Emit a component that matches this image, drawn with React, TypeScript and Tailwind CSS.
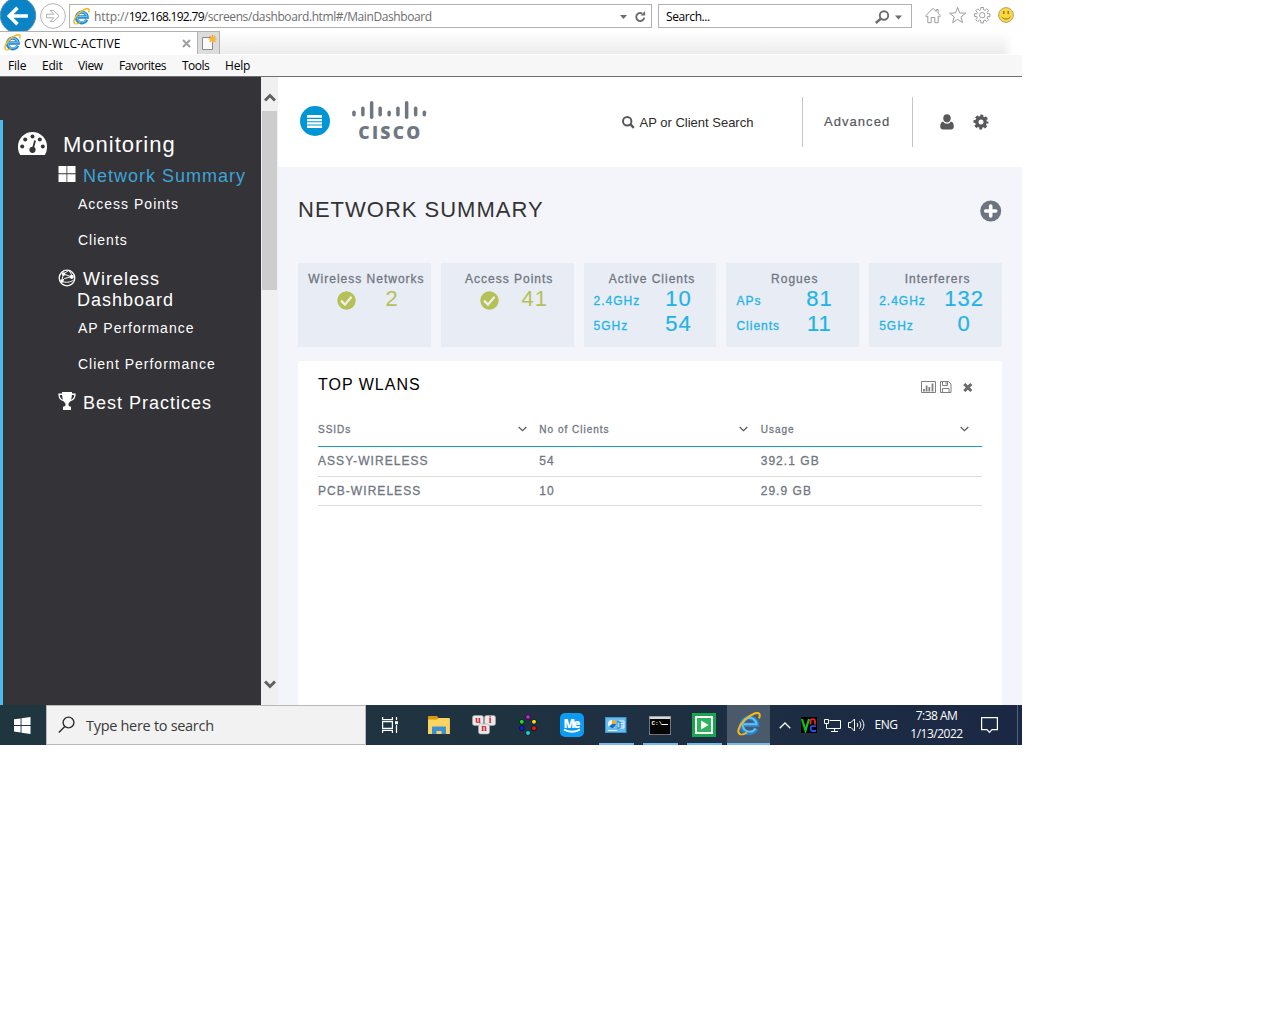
import React from "react";

const ui = "font-['Open_Sans','Noto_Sans',sans-serif]";

function IELogo({ size }: { size: number }) {
  return (
    <svg width={size} height={size} viewBox="0 0 24 24" fill="none" className="shrink-0">
      <path d="M19.4 16.4A7.6 7.600 0 1 1 20 12.700H7" stroke="#2583cc" strokeWidth="4.600" />
      <path d="M18.600 16.400A7 7 0 1 1 19.600 12.200H7" stroke="#66bff0" strokeWidth="2" />
      <path d="M3.600 22.400C-.8 21 1.800 13.600 8 7.600 14 2 21.200-.8 22.500 2.200c.5 1.200.2 2.600-.5 4.200" stroke="#f4b81c" strokeWidth="2.100" />
      <path d="M3.600 22.400c1.800.6 4.200-.5 6.400-1.900" stroke="#f4b81c" strokeWidth="1.600" />
    </svg>
  );
}

function Gear({ size, color }: { size: number; color: string }) {
  return (
    <svg width={size} height={size} viewBox="0 0 16 16" fill="none" className="shrink-0">
      <circle cx="8" cy="8" r="4.2" stroke={color} strokeWidth="3.400" />
      <circle cx="8" cy="8" r="6.300" stroke={color} strokeWidth="2.400" strokeDasharray="2.900 2.048" strokeDashoffset="1.450" />
    </svg>
  );
}

function Toolbar() {
  return (
    <div className="flex h-[31px] items-start">
      <svg width="68" height="31" viewBox="0 0 68 31" fill="none" className="shrink-0">
        <circle cx="18" cy="15.5" r="17.7" fill="#0a84c6" stroke="#5e8ba8" />
        <path d="M28 16H10M17.5 7.8 9.3 16l8.2 8.2" stroke="#fff" strokeWidth="3.6" />
        <circle cx="53" cy="16" r="12.4" stroke="#b4b4b4" />
        <path d="M46.5 14.2h7.3l-3.4-3.7h3.2l5.6 5.5-5.6 5.5h-3.2l3.4-3.7h-7.3z" stroke="#b0b0b0" />
      </svg>
      <div className="ml-[1px] mt-[4px] flex h-[24px] w-[583px] shrink-0 items-center border border-[#b2b2b2] bg-white pl-[3px]">
        <IELogo size={17} />
        <span className={`${ui} ml-[4px] mt-[2px] whitespace-pre text-[12px] leading-[22px] tracking-[-0.400px] text-[#6d6d6d]`}>
          <span className="tracking-[-0.080px]">http://</span><span className="tracking-[-0.700px] text-black">192.168.192.79</span>/screens/dashboard.html#/MainDashboard
        </span>
        <svg width="30" height="14" viewBox="0 0 30 14" className="ml-auto mr-[2px] mt-[1px] shrink-0" fill="none">
          <path d="M1 5h7L4.500 9z" fill="#6d6d6d" />
          <path d="M25.200 7.600a4 4 0 1 1-2-4.100" stroke="#6d6d6d" strokeWidth="1.900" />
          <path d="M21.500 5.600h4.600V1z" fill="#6d6d6d" />
        </svg>
      </div>
      <div className="ml-[6px] mt-[4px] flex h-[24px] w-[254px] shrink-0 items-center border border-[#b2b2b2] bg-white pl-[7px]">
        <span className={`${ui} mt-[2px] text-[12px] tracking-[-0.400px] text-black`}>Search...</span>
        <svg width="30" height="16" viewBox="0 0 30 16" className="ml-auto mr-[7px] mt-[1px] shrink-0" fill="none">
          <circle cx="10" cy="6.500" r="4.200" stroke="#6d6d6d" strokeWidth="1.900" />
          <path d="M7 9.500 1.800 14" stroke="#6d6d6d" strokeWidth="2.400" />
          <path d="M21 6.500h7l-3.500 4z" fill="#6d6d6d" />
        </svg>
      </div>
      <svg width="110" height="31" viewBox="912 0 110 31" fill="none" stroke="#9d9d9d" className="shrink-0">
        <path d="M925.5 15.8 933 8.4l3.2 3.1V9.5h1.8v3.8l2.6 2.5-1.2 1.2-1.2-1v6.700h-3.400v-5.200h-3.600v5.200h-3.400V16l-1.200 1z" />
        <path d="m957.6 7.4 2.1 5.5 5.9.3-4.6 3.7 1.6 5.7-5-3.2-4.9 3.2 1.5-5.7-4.6-3.7 5.9-.3z" />
        <circle cx="982.2" cy="15.2" r="2.7" />
        <path d="M980.8 9.8v-2.300h2.800v2.300l1.400.6 1.700-1.600 1.900 1.900-1.600 1.700.6 1.400h2.300v2.800h-2.300l-.6 1.400 1.600 1.700-1.900 1.900-1.700-1.600-1.400.6v2.300h-2.800v-2.300l-1.400-.6-1.700 1.600-1.900-1.900 1.600-1.700-.6-1.400h-2.300v-2.800h2.300l.6-1.400-1.600-1.700 1.900-1.900 1.700 1.600z" />
        <circle cx="1006" cy="15" r="7.400" fill="#fcd83c" stroke="#a8a286" />
        <path d="M1003.800 11v3M1008.200 11v3" stroke="#8a7420" strokeWidth="1.400" />
        <path d="M1001.800 16.800c1.800 3 6.600 3 8.400 0" stroke="#8a7420" />
      </svg>
    </div>
  );
}

function Tabs() {
  return (
    <div className="flex h-[23px]">
      <div className="flex w-[197px] shrink-0 items-center border-t border-[#b2b2b2] bg-white pl-[4px]">
        <div className="-mt-[1px]"><IELogo size={17} /></div>
        <span className={`${ui} ml-[3px] mt-[1px] text-[12px] tracking-[0.080px] text-black`}>CVN-WLC-ACTIVE</span>
        <svg width="9" height="9" viewBox="0 0 9 9" className="ml-auto mr-[6px]">
          <path d="m1 1 7 7M8 1 1 8" stroke="#a0a0a0" strokeWidth="2" />
        </svg>
      </div>
      <div className="flex w-[23px] shrink-0 border border-b-0 border-[#b2b2b2] bg-[#dcdcdc]">
        <svg width="21" height="22" viewBox="0 0 21 22" fill="none">
          <path d="M4.500 5.500h10v12h-10z" fill="#fafafa" stroke="#8a8a8a" />
          <path d="M14.500 3v8M10.500 7h8M11.700 4.200l5.600 5.600M17.300 4.200l-5.600 5.600" stroke="#f0a010" strokeWidth="1.200" />
          <circle cx="14.500" cy="7" r="2.200" fill="#ffb52b" />
        </svg>
      </div>
      <div className="flex grow bg-gradient-to-b from-white to-[#ececec]">
        <div className="ml-auto w-[20px] bg-gradient-to-r from-white/0 to-white to-60%" />
      </div>
    </div>
  );
}

function MenuBar() {
  return (
    <div className={`${ui} flex h-[23px] items-center border-b border-t border-b-[#707070] border-t-white bg-[#f7f7f7] pl-[8px] pt-[1px] text-[12px] text-black`}>
      <span className="w-[34px] tracking-[-0.200px]">File</span>
      <span className="w-[36px] tracking-[-0.200px]">Edit</span>
      <span className="w-[41px] tracking-[-0.400px]">View</span>
      <span className="w-[63px] tracking-[-0.400px]">Favorites</span>
      <span className="w-[43px] tracking-[-0.500px]">Tools</span>
      <span className="tracking-[-0.200px]">Help</span>
    </div>
  );
}

function SubItem({ children }: { children: React.ReactNode }) {
  return <div className="flex h-[36px] items-center pl-[75px] text-[14px] tracking-[1px]">{children}</div>;
}

function Sidebar() {
  return (
    <div className="flex w-[261px] shrink-0 flex-col bg-[#343338] pt-[43px] text-white">
      <div className="grow border-l-[3px] border-[#4cbcf0]">
        <div className="flex h-[46px] items-center pl-[15px] pt-[2px] text-[22px] tracking-[1px]">
          <svg width="29" height="23" viewBox="0 0 29 23" className="-mt-[2px] mr-[16px] shrink-0">
            <path d="M2.200 23A14.500 14.500 0 0 1 0 14.500a14.500 14.500 0 0 1 29 0A14.500 14.500 0 0 1 26.800 23z" fill="#fff" />
            <g fill="#343338">
              <circle cx="4.200" cy="14.600" r="2" />
              <circle cx="7.200" cy="7.400" r="2" />
              <circle cx="14.500" cy="4.400" r="2" />
              <circle cx="21.800" cy="7.400" r="2" />
              <circle cx="24.800" cy="14.600" r="2" />
              <circle cx="14.500" cy="17.800" r="3.100" />
            </g>
            <path d="m14.800 17 2.300-8.600" stroke="#343338" strokeWidth="1.800" />
          </svg>
          Monitoring
        </div>
        <div className="flex h-[20px] items-center pl-[55px] text-[18px] tracking-[1px] text-[#3ea4d6]">
          <svg width="18" height="16" viewBox="0 0 18 16" className="-mt-[4px] mr-[7px] shrink-0">
            <path d="M.5 0h8v7.300h-8zM9.300 0h8.200v7.300H9.300zM.5 8.300h8V16h-8zM9.300 8.300h8.200V16H9.300z" fill="#fff" />
          </svg>
          <span className="whitespace-nowrap">Network Summary</span>
        </div>
        <SubItem>Access Points</SubItem>
        <SubItem>Clients</SubItem>
        <div className="mt-[11px] flex h-[41px] pl-[55px] text-[18px] leading-[21px] tracking-[1px]">
          <svg width="18" height="18" viewBox="0 0 18 18" fill="none" stroke="#fff" className="mr-[1px] shrink-0">
            <circle cx="9" cy="9" r="7.800" strokeWidth="1.300" />
            <path d="m5.500 5 8 2.800M5.500 5l-2 7.500 3-3 7-1.800M3.800 12.300c4 1.600 8 1.200 12-1.300M5.500 5l5-3.400c2 1.500 3 3.200 3.400 6" />
            <circle cx="5.500" cy="5" r="1.800" fill="#fff" stroke="none" />
            <circle cx="13.800" cy="7.800" r="2.100" fill="#fff" stroke="none" />
            <circle cx="4" cy="12" r="1.800" fill="#fff" stroke="none" />
          </svg>
          <span className="indent-[6px]">Wireless<br />Dashboard</span>
        </div>
        <SubItem>AP Performance</SubItem>
        <SubItem>Client Performance</SubItem>
        <div className="mt-[11px] flex h-[21px] items-center pl-[55px] text-[18px] tracking-[1px]">
          <svg width="18" height="18" viewBox="0 0 18 18" className="-mt-[5px] mr-[7px] shrink-0">
            <path d="M4 0h10v1.600h3.600c.3 4.200-1.600 7-5.200 7.600-1 1.400-1.900 1.800-2 3.200.1 1.600 1.200 2 2.600 2.400V18H5v-3.200c1.400-.4 2.500-.8 2.600-2.400-.1-1.400-1-1.800-2-3.200C2 8.600.1 5.800.4 1.600H4z" fill="#fff" />
            <path d="M1.700 2.900h2.400c.1 1.800.3 3.200 1 4.800C2.900 6.900 1.800 5.100 1.700 2.900zM16.300 2.900h-2.400c-.1 1.800-.3 3.200-1 4.800 2.200-.8 3.300-2.600 3.400-4.800z" fill="#343338" />
          </svg>
          Best Practices
        </div>
      </div>
    </div>
  );
}

function ScrollBar() {
  return (
    <div className="flex w-[17px] shrink-0 flex-col bg-[#f0f0f0]">
      <svg width="12" height="9" viewBox="0 0 12 9" className="ml-[2.500px] mt-[16px]" fill="none">
        <path d="m1 7.500 5-5 5 5" stroke="#606060" strokeWidth="3" />
      </svg>
      <div className="ml-[1px] mt-[9px] h-[179px] w-[15px] bg-[#cdcdcd]" />
      <svg width="12" height="9" viewBox="0 0 12 9" className="mb-[16px] ml-[2.500px] mt-auto" fill="none">
        <path d="m1 1.500 5 5 5-5" stroke="#606060" strokeWidth="3" />
      </svg>
    </div>
  );
}

function CiscoLogo() {
  const bars = [
    [0, 10.5, 6], [8.9, 6.5, 10], [17.7, 1, 18], [26.2, 6.5, 10], [35.2, 10.5, 6],
    [44, 6.5, 10], [52.7, 1, 18], [61.7, 6.5, 10], [70.4, 10.5, 6],
  ];
  return (
    <svg width="76" height="46" viewBox="0 0 76 46" className="mt-[2px] shrink-0 overflow-visible">
      {bars.map(([x, y, h]) => (
        <rect key={x} x={x + 0.2} y={y} width="3.500" height={h} rx="1.700" fill="#717782" />
      ))}
      <text x="6.300" y="38.600" fontFamily="'Open Sans',sans-serif" fontWeight="800" fontSize="17.500" textLength="62" lengthAdjust="spacing" fill="#717782">CISCO</text>
    </svg>
  );
}

function PageHeader() {
  return (
    <div className="flex h-[90px] shrink-0 items-center bg-white pl-[22px]">
      <svg width="30" height="30" viewBox="0 0 30 30" className="-mt-[3px] mr-[22px] shrink-0">
        <circle cx="15" cy="15" r="15" fill="#0096d6" />
        <path d="M7 9h15v2.700H7zM7 13h15v2.200H7zM7 16.300h15v2.200H7zM7 19.500h15v2.400H7z" fill="#fff" />
      </svg>
      <CiscoLogo />
      <svg width="13" height="13" viewBox="0 0 13 13" fill="none" className="ml-[194px] shrink-0">
        <circle cx="5.200" cy="5.200" r="4.200" stroke="#58585b" strokeWidth="2" />
        <path d="m8.200 8.200 3.600 3.600" stroke="#58585b" strokeWidth="2.400" />
      </svg>
      <span className="ml-[4.500px] mt-[1px] w-[162.500px] whitespace-nowrap text-[13px] text-[#2b2b2b]">AP or Client Search</span>
      <div className="flex h-[50px] w-[111px] items-center border-x border-[#c4c4c4] pl-[21px] text-[13px] tracking-[1.050px] text-[#58585b] [-webkit-text-stroke:0.200px]">Advanced</div>
      <svg width="14" height="16" viewBox="0 0 14 16" className="ml-[27px]" fill="#58585b">
        <ellipse cx="7" cy="4.300" rx="3.700" ry="4.100" />
        <path d="M3.200 7.500C4 9.200 5.400 9.700 7 9.700s3-.5 3.800-2.200c2 .2 3 2 3 5 0 1.700-.9 2.900-2.600 2.900H2.800C1.100 15.400.2 14.200.2 12.500c0-3 1-4.800 3-5z" />
      </svg>
      <div className="ml-[19px]"><Gear size={16} color="#58585b" /></div>
    </div>
  );
}

function Check() {
  return (
    <svg width="19" height="19" viewBox="0 0 19 19" fill="none">
      <circle cx="9.500" cy="9.500" r="9.200" fill="#b5c156" />
      <path d="m4 9.600 4 4 6.500-7.800" stroke="#eef1ee" strokeWidth="2.200" />
    </svg>
  );
}

function CardTitle({ children }: { children: React.ReactNode }) {
  return (
    <div className="whitespace-nowrap pl-[4px] text-center text-[12px] leading-[16px] tracking-[1px] text-[#717782] [-webkit-text-stroke:0.300px]">{children}</div>
  );
}

function StatusCard({ title, value }: { title: string; value: string }) {
  return (
    <div className="h-[84px] bg-[#e8ecf4] pt-[8px]">
      <CardTitle>{title}</CardTitle>
      <div className="flex h-[25px] pl-[39px]">
        <div className="mt-[4px] w-[31px]"><Check /></div>
        <div className="w-[48px] text-center text-[22px] leading-[24px] tracking-[1px] text-[#b5c156]">{value}</div>
      </div>
    </div>
  );
}

function PairCard({ title, rows }: { title: string; rows: string[][] }) {
  return (
    <div className="h-[84px] bg-[#e8ecf4] pt-[8px]">
      <CardTitle>{title}</CardTitle>
      {rows.map(([label, value]) => (
        <div key={label} className="flex h-[25px] pl-[10px] text-[#1fb4e6]">
          <div className={`${title === "Rogues" ? "w-[58px]" : "w-[60px]"} pt-[2px] text-[12px] leading-[24px] tracking-[1px] [-webkit-text-stroke:0.300px]`}>{label}</div>
          <div className="w-[50px] text-center text-[22px] leading-[24px] tracking-[1px] [-webkit-text-stroke:0.200px]">{value}</div>
        </div>
      ))}
    </div>
  );
}

function HeadCell({ children }: { children: React.ReactNode }) {
  return (
    <div className="flex items-center text-[10px] tracking-[1px] [-webkit-text-stroke:0.300px]">
      {children}
      <svg width="9" height="6" viewBox="0 0 9 6" fill="none" className="-mt-[2px] ml-auto mr-[12.500px]">
        <path d="m.7 1 3.800 3.600L8.300 1" stroke="#58585b" strokeWidth="1.200" />
      </svg>
    </div>
  );
}

function WlanPanel() {
  const rows = [
    ["ASSY-WIRELESS", "54", "392.1 GB"],
    ["PCB-WIRELESS", "10", "29.9 GB"],
  ];
  return (
    <div className="mt-[14px] grow rounded-t-[2px] bg-white px-[20px] text-[#717782]">
      <div className="flex h-[52px] items-center">
        <h2 className="-mt-[5px] text-[16px] tracking-[1px] text-black">TOP WLANS</h2>
        <svg width="53" height="14" viewBox="0 0 53 14" fill="none" stroke="#808080" className="ml-auto mr-[8px]">
          <path d="M.5 1.500h14v11H.5z" />
          <path d="M3 11.500V9M5.600 11.500V5.500M8.300 11.500V7M11.500 11.500V3.500" strokeWidth="1.800" />
          <path d="M19.500 1.500h8l2.500 2.500v8.500H19.500zM21.500 1.500v4h5v-4M21.500 12.500v-4h6.500v4" />
          <path d="M25 2v2.500" />
          <path d="m43.300 4 7 7M50.300 4l-7 7" stroke="#6a6a6a" strokeWidth="3" />
        </svg>
      </div>
      <div className="grid h-[34px] grid-cols-3 border-b border-[#1a9cc8]">
        <HeadCell>SSIDs</HeadCell>
        <HeadCell>No of Clients</HeadCell>
        <HeadCell>Usage</HeadCell>
      </div>
      {rows.map((row) => (
        <div key={row[0]} className="grid h-[29.500px] grid-cols-3 items-center border-b border-[#dcdcdc] text-[12px] tracking-[1.050px] [-webkit-text-stroke:0.300px]">
          {row.map((cell) => <span key={cell}>{cell}</span>)}
        </div>
      ))}
    </div>
  );
}

function Dashboard() {
  return (
    <div className="flex w-[744px] flex-col bg-[#f4f5fa]">
      <PageHeader />
      <div className="flex grow flex-col px-[20px]">
        <div className="flex h-[96px] items-center justify-between pb-[10px]">
          <h1 className="-mt-[2px] text-[22px] tracking-[1px] text-[#333]">NETWORK SUMMARY</h1>
          <svg width="22" height="22" viewBox="0 0 22 22" className="mt-[1px]">
            <circle cx="10.700" cy="11" r="10.500" fill="#6d737f" />
            <path d="M10.700 6v10M5.700 11h10" stroke="#fff" strokeWidth="3.600" strokeLinecap="round" />
          </svg>
        </div>
        <div className="grid grid-cols-5 gap-2.5">
          <StatusCard title="Wireless Networks" value="2" />
          <StatusCard title="Access Points" value="41" />
          <PairCard title="Active Clients" rows={[["2.4GHz", "10"], ["5GHz", "54"]]} />
          <PairCard title="Rogues" rows={[["APs", "81"], ["Clients", "11"]]} />
          <PairCard title="Interferers" rows={[["2.4GHz", "132"], ["5GHz", "0"]]} />
        </div>
        <WlanPanel />
      </div>
    </div>
  );
}

function TaskButton({ children, running, active }: { children: React.ReactNode; running?: boolean; active?: boolean }) {
  return (
    <div className={`flex h-[40px] w-[44px] shrink-0 flex-col items-center ${active ? "border-l border-[#1f3040] bg-[#4a5a6b]" : ""}`}>
      <div className="flex h-[38px] items-center pt-[2px]">{children}</div>
      {running && <div className={`h-[2px] bg-[#76b9ed] ${active ? "w-full" : "w-[35px]"}`} />}
    </div>
  );
}

function Taskbar() {
  return (
    <div className={`${ui} flex h-[40px] shrink-0 bg-gradient-to-r from-[#20363f] via-[#1f3240] to-[#1b2845] text-white`}>
      <div className="flex w-[46px] shrink-0 items-center justify-center">
        <svg width="17" height="17" viewBox="0 0 17 17" fill="#fff" className="ml-[-2px]">
          <path d="M0 2.300 6.600 1.400V8H0zM7.500 1.200 16.500 0v8h-9zM0 8.900h6.600v6.600L0 14.600zM7.500 8.900h9v8l-9-1.200z" />
        </svg>
      </div>
      <div className="flex w-[320px] shrink-0 items-center border border-[#b8b8b8] bg-[#f2f2f2] pl-[11px]">
        <svg width="17" height="18" viewBox="0 0 17 18" fill="none" stroke="#2b2b2b" strokeWidth="1.400">
          <circle cx="10.500" cy="6.500" r="5.400" />
          <path d="m6.800 10.500-6 6" />
        </svg>
        <span className="ml-[11px] mt-[1px] text-[14.500px] tracking-[-0.300px] text-[#3a3a3a]">Type here to search</span>
      </div>
      <div className="mr-[4px] flex w-[48px] shrink-0 items-center justify-center">
        <svg width="16" height="16" viewBox="0 0 16 16" fill="none" stroke="#fff" strokeWidth="1.200">
          <path d="M.6 0v2.600h9.800V0M.6 4.600h9.800v6.800H.6zM.6 16v-2.600h9.800V16M14.500 0v3M14.500 8v8" />
          <path d="M13 4.200h3v3h-3z" fill="#fff" stroke="none" />
        </svg>
      </div>
      <TaskButton>
        <svg width="22" height="18" viewBox="0 0 22 18" className="mr-[2px]">
          <path d="M0 1c0-.6.400-1 1-1h8l1.500 2H21v3H0z" fill="#d9980a" />
          <path d="M0 3.500h9l1.500-1.500H21c.5 0 .9.400.9.900V18H0z" fill="#fcd462" />
          <path d="M4 18v-6.500c0-.6.400-1 1-1h12c.6 0 1 .4 1 1V18h-4.500v-3h-5v3z" fill="#3f8fd6" />
        </svg>
      </TaskButton>
      <TaskButton>
        <svg width="24" height="20" viewBox="0 0 24 20" fontFamily="'Liberation Serif',serif" fontWeight="bold" fontSize="10" fill="#d5222c">
          <g fill="#e9e9ea" stroke="#a8a8aa" strokeWidth=".6">
            <rect x=".5" y=".5" width="11" height="10" rx="2" />
            <rect x="12.500" y=".5" width="11" height="10" rx="2" />
            <rect x="6.500" y="9" width="11" height="10" rx="2" />
          </g>
          <text x="3.200" y="7.800">u</text>
          <text x="16.800" y="7.800">i</text>
          <text x="9.300" y="16.300">n</text>
        </svg>
      </TaskButton>
      <TaskButton>
        <svg width="20" height="22" viewBox="0 0 20 22" stroke="#081018" strokeWidth=".8">
          <circle cx="10" cy="3" r="2.400" fill="#d81ad8" />
          <circle cx="16" cy="7.800" r="2.400" fill="#f2e21c" />
          <circle cx="16" cy="14.200" r="2.400" fill="#f01818" />
          <circle cx="10" cy="19" r="2.400" fill="#18d8e0" />
          <circle cx="3.800" cy="14.200" r="2.400" fill="#1818e8" />
          <circle cx="3.800" cy="7.800" r="2.400" fill="#20e020" />
        </svg>
      </TaskButton>
      <TaskButton>
        <svg width="24" height="24" viewBox="0 0 24 24">
          <rect width="24" height="24" rx="5" fill="#0c9bf2" />
          <text x="3.500" y="14.500" fontFamily="'Open Sans',sans-serif" fontWeight="800" fontSize="12" textLength="17" fill="#fff">Me</text>
          <path d="M4 16.500c4 3 12 3 16 0" stroke="#fff" strokeWidth="1.800" fill="none" />
        </svg>
      </TaskButton>
      <TaskButton running>
        <svg width="22" height="16" viewBox="0 0 22 16" fill="none">
          <rect x=".5" y=".5" width="20.500" height="15" fill="#68bdee" stroke="#3f94cc" />
          <circle cx="7" cy="7" r="4" fill="#e8f6ff" />
          <path d="M7 7V3a4 4 0 0 1 4 4z" fill="#f3a623" />
          <path d="M7 7h4a4 4 0 0 1-7 2.600z" fill="#1670b8" />
          <path d="M14 4h5v7h-5zM14 6.500h5M14 9h5M3 13.500h9" stroke="#e4f4ff" />
          <path d="M12 5h3v6h-3" stroke="#1670b8" />
        </svg>
      </TaskButton>
      <TaskButton running>
        <svg width="22" height="19" viewBox="0 0 22 19">
          <path d="M0 0h22v19H0z" fill="#8e9296" />
          <path d="M.8 3h20.400v15.200H.8z" fill="#050505" />
          <path d="M.8.8h20.400V3H.8z" fill="#d8d8d8" />
          <text x="2.500" y="9" fontFamily="'Liberation Mono',monospace" fontWeight="bold" fontSize="6" fill="#fff">C:\</text>
          <path d="M13 8.500h6" stroke="#fff" />
        </svg>
      </TaskButton>
      <TaskButton running>
        <svg width="24" height="24" viewBox="0 0 24 24">
          <path d="M0 0h24v24H0z" fill="#18a54c" />
          <path d="M4 4h16v16H4z" fill="#2fb45d" stroke="#fff" strokeWidth="2" />
          <path d="m9 7.500 7.500 4.500L9 16.500z" fill="#fff" />
        </svg>
      </TaskButton>
      <TaskButton running active><div className="-mt-[2px]"><IELogo size={24} /></div></TaskButton>
      <div className="flex w-[247px] shrink-0 items-center">
        <svg width="12" height="7" viewBox="0 0 12 7" fill="none" className="ml-[9px]">
          <path d="M.7 6.300 6 1l5.300 5.300" stroke="#fff" strokeWidth="1.300" />
        </svg>
        <svg width="16" height="16" viewBox="0 0 16 16" fill="none" className="ml-[10px]">
          <path d="M0 0h16v16H0z" fill="#000" />
          <path d="m1 2 3.500 11.500L8 2" stroke="#10c020" strokeWidth="2.200" />
          <path d="M9.500 7.500V4.200c0-2.800 4.500-2.800 4.500 0v3.300" stroke="#f02020" strokeWidth="1.800" />
          <path d="M15 9.200h-3.500c-2.400 0-2.400 4.800 0 4.800H15" stroke="#2850f0" strokeWidth="1.800" />
        </svg>
        <svg width="17" height="15" viewBox="0 0 17 15" fill="none" stroke="#fff" className="ml-[7px]">
          <path d="M5.500 2.500h11v8H4.500M10.500 10.500v3M7 13.500h7M.5 1.500h4v4h-4zM2.500 5.500v5h2" />
        </svg>
        <svg width="17" height="14" viewBox="0 0 17 14" fill="none" stroke="#fff" className="ml-[7px]">
          <path d="M.5 4.500H3L6.500 1v12L3 9.500H.5z" />
          <path d="M9 5c1 1.200 1 2.800 0 4M11.300 3.300c2 2.200 2 5.200 0 7.400M13.600 1.500c3 3.200 3 7.800 0 11" />
        </svg>
        <span className="ml-[9.500px] w-[23.500px] text-[12px] tracking-[-0.500px]">ENG</span>
        <div className="ml-[3.500px] -mt-[1px] w-[70px] whitespace-nowrap text-center text-[12px] leading-[18px] tracking-[-0.500px]">7:38 AM<br />1/13/2022</div>
        <svg width="17" height="17" viewBox="0 0 17 17" fill="none" stroke="#fff" className="ml-[9px]" strokeWidth="1.200">
          <path d="M.6.6h15.800v12H11l-2.500 2.800L6 12.600H.6z" />
        </svg>
      </div>
      <div className="grow border-l border-[#56627a]" />
    </div>
  );
}

export default function App() {
  return (
    <div className="h-[1021px] w-[1274px] overflow-hidden bg-white font-['Liberation_Sans',Arial,sans-serif]">
      <div className="flex h-[745px] w-[1022px] flex-col overflow-hidden">
        <Toolbar />
        <Tabs />
        <MenuBar />
        <div className="flex h-[628px] shrink-0">
          <Sidebar />
          <ScrollBar />
          <Dashboard />
        </div>
        <Taskbar />
      </div>
    </div>
  );
}
